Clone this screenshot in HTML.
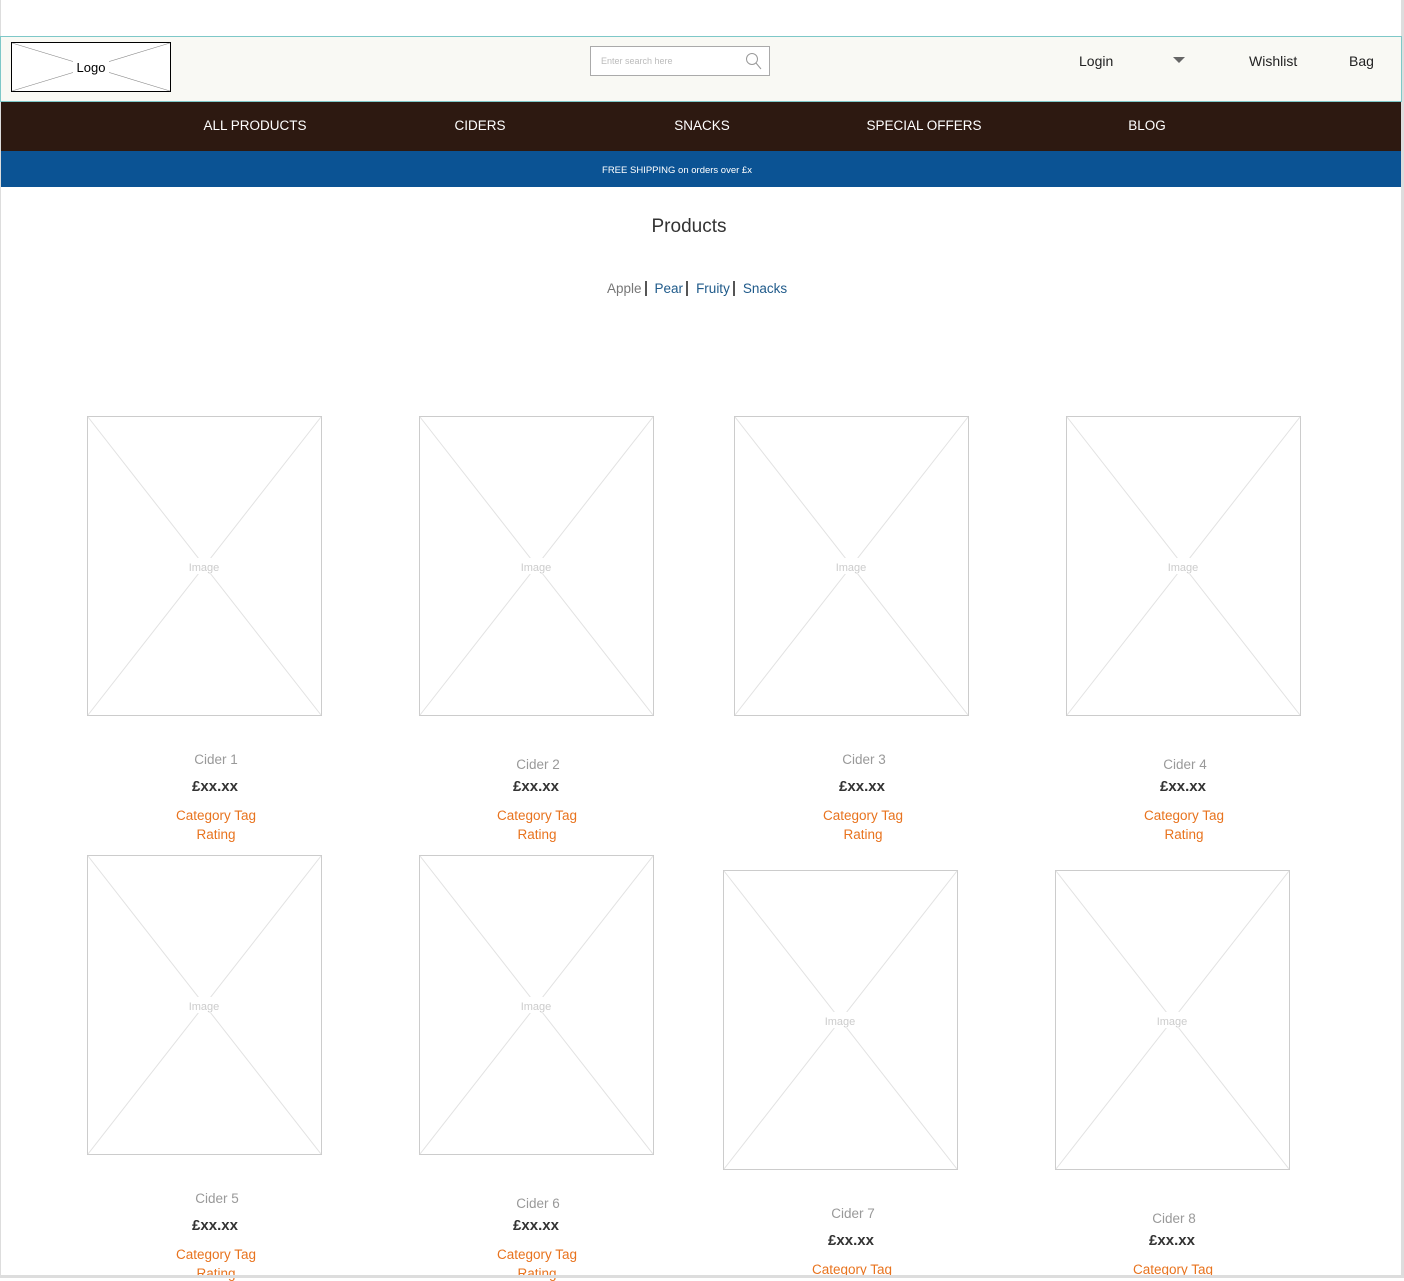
<!DOCTYPE html>
<html><head><meta charset="utf-8"><style>
*{margin:0;padding:0;box-sizing:border-box}
body{width:1404px;height:1278px;overflow:hidden;background:#fff;font-family:"Liberation Sans",sans-serif;position:relative}
.a{position:absolute}
.t{position:absolute;white-space:nowrap;transform:translateX(-50%)}
.img{position:absolute;width:235px;height:300px}
.name{color:#999;font-size:13.5px}
.price{color:#333;font-size:15px;font-weight:bold}
.tag{color:#e8731e;font-size:13.5px}
.nav{color:#fff;font-size:13.5px}
</style></head><body>
<div class="a" style="left:1401px;top:0;width:3px;height:1278px;background:#ddd"></div>
<div class="a" style="left:0;top:0;width:1px;height:1278px;background:#ddd"></div>
<div class="a" style="left:0;top:36px;width:1402px;height:66px;background:#f9f9f4;border:1px solid #7ec8c8"></div>
<svg class="a" style="left:11px;top:42px" width="160" height="50"><rect x="0.5" y="0.5" width="159" height="49" fill="#fff" stroke="#000"/><line x1="1" y1="1" x2="159" y2="49" stroke="#888" stroke-width=".6"/><line x1="159" y1="1" x2="1" y2="49" stroke="#888" stroke-width=".6"/><rect x="62" y="17" width="36" height="16" fill="#fff"/><text x="80" y="30" font-size="13" text-anchor="middle" font-family="Liberation Sans">Logo</text></svg>
<div class="a" style="left:590px;top:46px;width:180px;height:30px;border:1px solid #aaa;background:#fff"></div>
<div class="a" style="left:601px;top:56px;font-size:9px;color:#bbb">Enter search here</div>
<svg class="a" style="left:745px;top:52px" width="18" height="18"><circle cx="7" cy="7" r="5.5" fill="none" stroke="#999" stroke-width="1"/><line x1="11" y1="11" x2="16" y2="17" stroke="#999"/></svg>
<div class="a" style="left:1079px;top:53px;font-size:14px;color:#222">Login</div>
<svg class="a" style="left:1173px;top:57px" width="12" height="8"><path d="M0 0L12 0L6 6Z" fill="#666"/></svg>
<div class="a" style="left:1249px;top:53px;font-size:14px;color:#222">Wishlist</div>
<div class="a" style="left:1349px;top:53px;font-size:14px;color:#222">Bag</div>
<div class="a" style="left:1px;top:102px;width:1400px;height:49px;background:#2d1911"></div>
<div class="t nav" style="left:255px;top:118px">ALL PRODUCTS</div>
<div class="t nav" style="left:480px;top:118px">CIDERS</div>
<div class="t nav" style="left:702px;top:118px">SNACKS</div>
<div class="t nav" style="left:924px;top:118px">SPECIAL OFFERS</div>
<div class="t nav" style="left:1147px;top:118px">BLOG</div>
<div class="a" style="left:1px;top:151px;width:1400px;height:36px;background:#0b5394"></div>
<div class="t" style="left:677px;top:165px;color:#fff;font-size:9.5px">FREE SHIPPING on orders over £x</div>
<div class="t" style="left:689px;top:216px;color:#333;font-size:19px">Products</div>
<div class="a" style="left:607px;top:281px;font-size:13.5px;color:#777">Apple<span style="border-left:2px solid #555;margin:0 8px 0 3px"></span><span style="color:#1f5a8a">Pear</span><span style="border-left:2px solid #555;margin:0 8px 0 3px"></span><span style="color:#1f5a8a">Fruity</span><span style="border-left:2px solid #555;margin:0 8px 0 3px"></span><span style="color:#1f5a8a">Snacks</span></div>
<svg width="0" height="0" style="position:absolute"><defs><g id="im"><rect x="0.5" y="0.5" width="234" height="299" fill="#fff" stroke="#ccc"/><line x1="1" y1="1" x2="234" y2="299" stroke="#e2e2e2"/><line x1="234" y1="1" x2="1" y2="299" stroke="#e2e2e2"/><rect x="98" y="142" width="40" height="16" fill="#fff"/></g></defs></svg>
<svg class="img" style="left:87px;top:416px"><use href="#im"/><text x="117" y="155" font-size="11" fill="#ccc" text-anchor="middle" font-family="Liberation Sans">Image</text></svg>
<svg class="img" style="left:419px;top:416px"><use href="#im"/><text x="117" y="155" font-size="11" fill="#ccc" text-anchor="middle" font-family="Liberation Sans">Image</text></svg>
<svg class="img" style="left:734px;top:416px"><use href="#im"/><text x="117" y="155" font-size="11" fill="#ccc" text-anchor="middle" font-family="Liberation Sans">Image</text></svg>
<svg class="img" style="left:1066px;top:416px"><use href="#im"/><text x="117" y="155" font-size="11" fill="#ccc" text-anchor="middle" font-family="Liberation Sans">Image</text></svg>
<svg class="img" style="left:87px;top:855px"><use href="#im"/><text x="117" y="155" font-size="11" fill="#ccc" text-anchor="middle" font-family="Liberation Sans">Image</text></svg>
<svg class="img" style="left:419px;top:855px"><use href="#im"/><text x="117" y="155" font-size="11" fill="#ccc" text-anchor="middle" font-family="Liberation Sans">Image</text></svg>
<svg class="img" style="left:723px;top:870px"><use href="#im"/><text x="117" y="155" font-size="11" fill="#ccc" text-anchor="middle" font-family="Liberation Sans">Image</text></svg>
<svg class="img" style="left:1055px;top:870px"><use href="#im"/><text x="117" y="155" font-size="11" fill="#ccc" text-anchor="middle" font-family="Liberation Sans">Image</text></svg>

<div class="t name" style="left:216px;top:752px">Cider 1</div><div class="t price" style="left:215px;top:778px">£xx.xx</div><div class="t tag" style="left:216px;top:808px">Category Tag</div><div class="t tag" style="left:216px;top:827px">Rating</div>
<div class="t name" style="left:538px;top:757px">Cider 2</div><div class="t price" style="left:536px;top:778px">£xx.xx</div><div class="t tag" style="left:537px;top:808px">Category Tag</div><div class="t tag" style="left:537px;top:827px">Rating</div>
<div class="t name" style="left:864px;top:752px">Cider 3</div><div class="t price" style="left:862px;top:778px">£xx.xx</div><div class="t tag" style="left:863px;top:808px">Category Tag</div><div class="t tag" style="left:863px;top:827px">Rating</div>
<div class="t name" style="left:1185px;top:757px">Cider 4</div><div class="t price" style="left:1183px;top:778px">£xx.xx</div><div class="t tag" style="left:1184px;top:808px">Category Tag</div><div class="t tag" style="left:1184px;top:827px">Rating</div>

<div class="t name" style="left:217px;top:1191px">Cider 5</div><div class="t price" style="left:215px;top:1217px">£xx.xx</div><div class="t tag" style="left:216px;top:1247px">Category Tag</div><div class="t tag" style="left:216px;top:1266px">Rating</div>
<div class="t name" style="left:538px;top:1196px">Cider 6</div><div class="t price" style="left:536px;top:1217px">£xx.xx</div><div class="t tag" style="left:537px;top:1247px">Category Tag</div><div class="t tag" style="left:537px;top:1266px">Rating</div>
<div class="t name" style="left:853px;top:1206px">Cider 7</div><div class="t price" style="left:851px;top:1232px">£xx.xx</div><div class="t tag" style="left:852px;top:1262px">Category Tag</div>
<div class="t name" style="left:1174px;top:1211px">Cider 8</div><div class="t price" style="left:1172px;top:1232px">£xx.xx</div><div class="t tag" style="left:1173px;top:1262px">Category Tag</div>
<div class="a" style="left:0;top:1275px;width:1404px;height:3px;background:#ddd"></div>
</body></html>
